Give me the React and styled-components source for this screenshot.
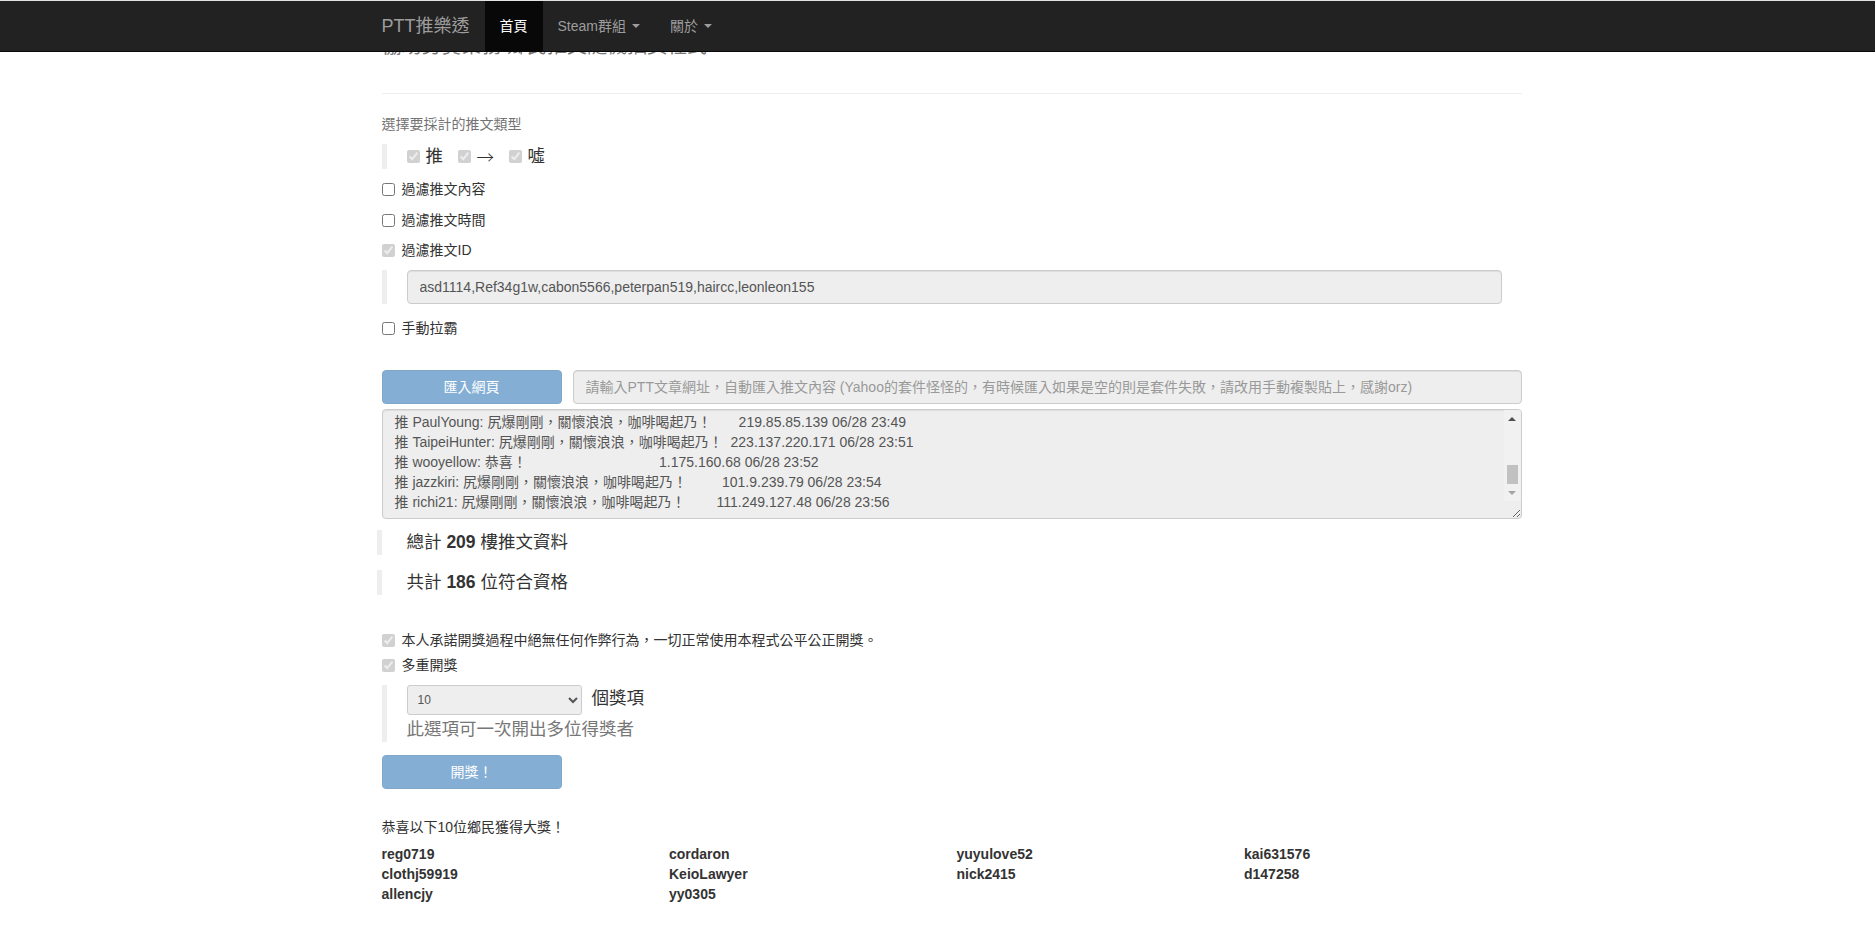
import React, { useLayoutEffect, useRef } from "react";
import styled, { createGlobalStyle } from "styled-components";

const GlobalStyle = createGlobalStyle`
  html, body { margin: 0; padding: 0; background: #fff; }
  body {
    font-family: "Liberation Sans", "Noto Sans CJK TC", sans-serif;
    font-size: 14px;
    line-height: 20px;
    color: #333;
  }
  * { box-sizing: border-box; }
`;

const FONT = `"Liberation Sans", "Noto Sans CJK TC", sans-serif`;

/* ---------- navbar ---------- */
const NavBar = styled.nav`
  position: fixed;
  top: 0;
  left: 0;
  right: 0;
  z-index: 10;
  height: 52px;
  background: #222;
  border-top: 1px solid #e3e3e3;
  border-bottom: 1px solid #080808;
  padding-left: 28px;
`;

const NavInner = styled.div`
  width: 1170px;
  margin: 0 auto;
  padding: 0 15px;
  display: flex;
  align-items: stretch;
  height: 50px;
`;

const Brand = styled.a`
  margin-left: -15px;
  padding: 15px;
  font-size: 18px;
  line-height: 20px;
  color: #9d9d9d;
  text-decoration: none;
  white-space: nowrap;
`;

const NavItem = styled.a`
  display: flex;
  align-items: center;
  padding: 0 15px;
  height: 50px;
  color: ${(p) => (p.$active ? "#fff" : "#9d9d9d")};
  background: ${(p) => (p.$active ? "#080808" : "transparent")};
  text-decoration: none;
  white-space: nowrap;
`;

const Caret = styled.span`
  display: inline-block;
  width: 0;
  height: 0;
  margin-left: 6px;
  border-top: 4px solid currentColor;
  border-left: 4px solid transparent;
  border-right: 4px solid transparent;
`;

/* ---------- page ---------- */
const Page = styled.div`
  padding-left: 28px;
  padding-top: 34px;
`;

const Container = styled.main`
  width: 1170px;
  margin: 0 auto;
  padding: 0 15px;
`;

const Title = styled.div`
  font-size: 20px;
  line-height: 24px;
  color: #777;
  margin-bottom: 35px;
  white-space: nowrap;
`;

const Rule = styled.hr`
  margin: 0 0 20px;
  border: 0;
  border-top: 1px solid #eee;
`;

const HelpText = styled.div`
  color: #737373;
  margin-bottom: 10px;
`;

const Quote = styled.div`
  border-left: 5px solid #eee;
  padding: 0 20px;
  font-size: 17.5px;
  line-height: 25px;
  margin-bottom: ${(p) => p.$mb || 0}px;
  margin-left: ${(p) => p.$shift || 0}px;
  padding-left: ${(p) => p.$pl || 20}px;
`;

const InlineChecks = styled.div`
  display: flex;
  align-items: center;
  gap: 14.5px;
  height: 25px;
`;

const InlineLabel = styled.label`
  display: flex;
  align-items: center;
  gap: 6px;
`;

const Arrow = styled.span`
  font-family: "Noto Sans CJK TC", sans-serif;
  font-weight: 300;
`;

const Check = styled.input.attrs({ type: "checkbox" })`
  width: 13px;
  height: 13px;
  margin: 0;
  flex: none;
`;

const CheckRow = styled.label`
  display: flex;
  align-items: center;
  gap: 7px;
  height: 20px;
  margin-bottom: ${(p) => p.$mb || 0}px;
  white-space: nowrap;
`;

const TextInput = styled.input`
  display: block;
  width: 100%;
  height: 34px;
  padding: 6px 12px;
  font-family: ${FONT};
  font-size: 14px;
  line-height: 20px;
  color: #555;
  background: #eee;
  border: 1px solid #ccc;
  border-radius: 4px;
  box-shadow: inset 0 1px 1px rgba(0, 0, 0, 0.075);
  &::placeholder { color: #999; }
`;

const ImportRow = styled.div`
  display: flex;
  gap: 11px;
  margin-bottom: 5px;
`;

const PrimaryButton = styled.button`
  flex: none;
  width: 180px;
  height: 34px;
  padding: 6px 12px;
  font-family: ${FONT};
  font-size: 14px;
  line-height: 20px;
  color: #fff;
  background: #337ab7;
  border: 1px solid #2e6da4;
  border-radius: 4px;
  opacity: 0.6;
  margin-bottom: ${(p) => p.$mb || 0}px;
  display: block;
`;

const AreaWrap = styled.div`
  position: relative;
  margin: 0 0 11px;
`;

const PushArea = styled.textarea`
  display: block;
  width: 100%;
  height: 110px;
  padding: 6px 29px 6px 12px;
  font-family: ${FONT};
  font-size: 14px;
  line-height: 20px;
  color: #555;
  background: #eee;
  border: 1px solid #ccc;
  border-radius: 4px;
  box-shadow: inset 0 1px 1px rgba(0, 0, 0, 0.075);
  white-space: pre;
  overflow-y: scroll;
  overflow-x: hidden;
  scrollbar-width: none;
  resize: vertical;
`;

/* drawn scrollbar laid over the textarea's right edge */
const FakeScrollbar = styled.div`
  position: absolute;
  top: 1px;
  right: 1px;
  bottom: 18px;
  width: 17px;
  background: #f1f1f1;
  display: flex;
  flex-direction: column;
  pointer-events: none;
  border-top-right-radius: 3px;
`;

const ScrollBtn = styled.div`
  flex: none;
  height: 17px;
  display: flex;
  align-items: center;
  justify-content: center;
  &::before {
    content: "";
    width: 0;
    height: 0;
    border-left: 4px solid transparent;
    border-right: 4px solid transparent;
    ${(p) =>
      p.$down
        ? "border-top: 4px solid #a3a3a3;"
        : "border-bottom: 4px solid #505050;"}
  }
`;

const ScrollTrack = styled.div`
  flex: 1;
  display: flex;
  flex-direction: column;
  justify-content: flex-end;
  padding: 0 3px;
`;

const ScrollThumb = styled.div`
  height: 19px;
  background: #c1c1c1;
`;

const Stat = styled.div`
  font-size: 17.5px;
  line-height: 25px;
`;

const SelectRow = styled.div`
  display: flex;
  align-items: baseline;
  gap: 10px;
  margin-bottom: 2px;
`;

const Select = styled.select`
  width: 175px;
  height: 30px;
  padding: 5px 6px;
  font-family: ${FONT};
  font-size: 12px;
  color: #555;
  background: #eee;
  border: 1px solid #ccc;
  border-radius: 3px;
`;

const Muted = styled.div`
  color: #777;
`;

const Congrats = styled.div`
  color: #333;
  margin-bottom: 7px;
`;

const WinnerGrid = styled.div`
  display: grid;
  grid-template-columns: repeat(4, 287.5px);
  grid-auto-rows: 20px;
  font-weight: bold;
`;

const pushLines = [
  "推 kevin0702: 尻爆剛剛，關懷浪浪，咖啡喝起乃！      1.163.42.15 06/28 23:31",
  "推 reg0719: 尻爆剛剛，關懷浪浪，咖啡喝起乃！        36.231.88.120 06/28 23:33",
  "推 cordaron: 尻爆剛剛，關懷浪浪，咖啡喝起乃！      114.36.72.10 06/28 23:35",
  "推 yuyulove52: 尻爆剛剛，關懷浪浪，咖啡喝起乃！    42.72.135.201 06/28 23:36",
  "推 kai631576: 尻爆剛剛，關懷浪浪，咖啡喝起乃！     61.228.17.94 06/28 23:38",
  "推 clothj59919: 尻爆剛剛，關懷浪浪，咖啡喝起乃！   118.165.9.33 06/28 23:40",
  "推 KeioLawyer: 尻爆剛剛，關懷浪浪，咖啡喝起乃！    27.52.196.7 06/28 23:41",
  "推 nick2415: 尻爆剛剛，關懷浪浪，咖啡喝起乃！       180.177.4.88 06/28 23:43",
  "推 d147258: 尻爆剛剛，關懷浪浪，咖啡喝起乃！        49.216.22.150 06/28 23:44",
  "推 allencjy: 尻爆剛剛，關懷浪浪，咖啡喝起乃！       220.137.60.12 06/28 23:46",
  "推 yy0305: 尻爆剛剛，關懷浪浪，咖啡喝起乃！         101.12.45.67 06/28 23:48",
  "推 PaulYoung: 尻爆剛剛，關懷浪浪，咖啡喝起乃！       219.85.85.139 06/28 23:49",
  "推 TaipeiHunter: 尻爆剛剛，關懷浪浪，咖啡喝起乃！  223.137.220.171 06/28 23:51",
  "推 wooyellow: 恭喜！                                  1.175.160.68 06/28 23:52",
  "推 jazzkiri: 尻爆剛剛，關懷浪浪，咖啡喝起乃！         101.9.239.79 06/28 23:54",
  "推 richi21: 尻爆剛剛，關懷浪浪，咖啡喝起乃！        111.249.127.48 06/28 23:56",
];

const winners = [
  "reg0719", "cordaron", "yuyulove52", "kai631576",
  "clothj59919", "KeioLawyer", "nick2415", "d147258",
  "allencjy", "yy0305",
];

export default function App() {
  const areaRef = useRef(null);
  useLayoutEffect(() => {
    const el = areaRef.current;
    if (el) el.scrollTop = el.scrollHeight;
  }, []);

  return (
    <>
      <GlobalStyle />
      <NavBar>
        <NavInner>
          <Brand href="#">PTT推樂透</Brand>
          <NavItem href="#" $active>首頁</NavItem>
          <NavItem href="#">Steam群組<Caret /></NavItem>
          <NavItem href="#">關於<Caret /></NavItem>
        </NavInner>
      </NavBar>

      <Page>
        <Container>
          <Title>協助勞賞業務 鄉民推文隨機抽獎程式</Title>
          <Rule />

          <HelpText>選擇要採計的推文類型</HelpText>
          <Quote $mb={10}>
            <InlineChecks>
              <InlineLabel><Check checked disabled readOnly />推</InlineLabel>
              <InlineLabel><Check checked disabled readOnly /><Arrow>→</Arrow></InlineLabel>
              <InlineLabel><Check checked disabled readOnly />噓</InlineLabel>
            </InlineChecks>
          </Quote>

          <CheckRow $mb={11}><Check readOnly />過濾推文內容</CheckRow>
          <CheckRow $mb={10}><Check readOnly />過濾推文時間</CheckRow>
          <CheckRow $mb={10}><Check checked disabled readOnly />過濾推文ID</CheckRow>

          <Quote $mb={14}>
            <TextInput
              disabled
              value="asd1114,Ref34g1w,cabon5566,peterpan519,haircc,leonleon155"
              readOnly
            />
          </Quote>

          <CheckRow $mb={32}><Check readOnly />手動拉霸</CheckRow>

          <ImportRow>
            <PrimaryButton disabled>匯入網頁</PrimaryButton>
            <TextInput
              disabled
              placeholder="請輸入PTT文章網址，自動匯入推文內容 (Yahoo的套件怪怪的，有時候匯入如果是空的則是套件失敗，請改用手動複製貼上，感謝orz)"
            />
          </ImportRow>

          <AreaWrap>
            <PushArea ref={areaRef} readOnly value={pushLines.join("\n")} />
            <FakeScrollbar>
              <ScrollBtn />
              <ScrollTrack><ScrollThumb /></ScrollTrack>
              <ScrollBtn $down />
            </FakeScrollbar>
          </AreaWrap>

          <Quote $mb={15} $shift={-5} $pl={25}>
            <Stat>總計 <b>209</b> 樓推文資料</Stat>
          </Quote>
          <Quote $mb={35} $shift={-5} $pl={25}>
            <Stat>共計 <b>186</b> 位符合資格</Stat>
          </Quote>

          <CheckRow $mb={5}><Check checked disabled readOnly />本人承諾開獎過程中絕無任何作弊行為，一切正常使用本程式公平公正開獎。</CheckRow>
          <CheckRow $mb={10}><Check checked disabled readOnly />多重開獎</CheckRow>

          <Quote $mb={13}>
            <SelectRow>
              <Select defaultValue="10">
                {[1, 2, 3, 4, 5, 6, 7, 8, 9, 10].map((n) => (
                  <option key={n} value={n}>{n}</option>
                ))}
              </Select>
              <span>個獎項</span>
            </SelectRow>
            <Muted>此選項可一次開出多位得獎者</Muted>
          </Quote>

          <PrimaryButton disabled $mb={28}>開獎！</PrimaryButton>

          <Congrats>恭喜以下10位鄉民獲得大獎！</Congrats>
          <WinnerGrid>
            {winners.map((w) => (
              <div key={w}>{w}</div>
            ))}
          </WinnerGrid>
        </Container>
      </Page>
    </>
  );
}
